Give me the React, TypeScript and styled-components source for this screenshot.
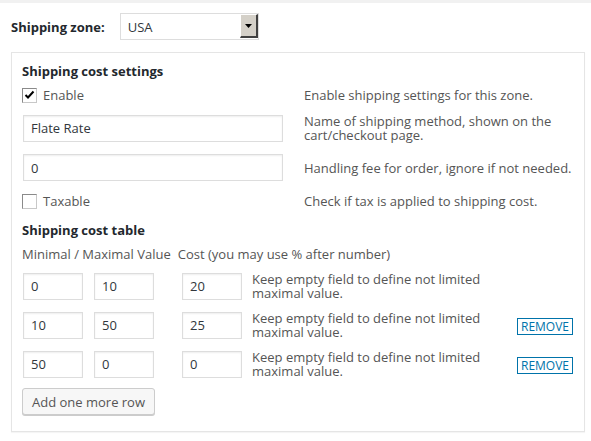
import React from "react";
import styled, { createGlobalStyle } from "styled-components";

const Global = createGlobalStyle`
  html, body { margin: 0; padding: 0; background: #fff; }
  body { font-family: "Open Sans", "Noto Sans", sans-serif; font-size: 13px; color: #555; }
  * { box-sizing: border-box; }
`;

const Page = styled.div`
  width: 591px;
  height: 441px;
  background: #fff;
  border-top: 3px solid #f1f1f1;
  padding: 10px 7px 0 11px;
`;

const ZoneRow = styled.div`
  display: flex;
  align-items: center;
  gap: 15px;
  height: 27px;
`;

const BoldLabel = styled.div`
  font-weight: 700;
  color: #23282d;
  font-size: 13px;
`;

const Select = styled.div`
  width: 139px;
  height: 27px;
  border: 1px solid #ddd;
  display: flex;
  align-items: stretch;
  background: #fff;
`;

const SelectValue = styled.div`
  flex: 1;
  display: flex;
  align-items: center;
  padding-left: 7px;
  color: #32373c;
`;

const Arrow = styled.div`
  width: 18px;
  background: #d4d0c8;
  border-top: 1px solid #fff;
  border-left: 1px solid #fff;
  border-right: 2px solid #404040;
  border-bottom: 2px solid #404040;
  display: flex;
  align-items: center;
  justify-content: center;
  margin: 0 0 1px 0;
`;

const Box = styled.div`
  margin-top: 12px;
  width: 574px;
  border: 1px solid #e5e5e5;
  box-shadow: 0 1px 1px rgba(0, 0, 0, 0.04);
  padding: 8px 10px 16px 10px;
  display: flex;
  flex-direction: column;
`;

const Heading = styled.div<{ $mt?: number }>`
  font-weight: 700;
  color: #23282d;
  font-size: 13px;
  line-height: 20px;
  margin-top: ${(p) => p.$mt ?? 0}px;
`;

const FieldRow = styled.div<{ $mt: number; $h: number }>`
  display: grid;
  grid-template-columns: 282px 1fr;
  align-items: center;
  margin-top: ${(p) => p.$mt}px;
  min-height: ${(p) => p.$h}px;
`;

const CheckLabel = styled.label`
  display: flex;
  align-items: center;
  gap: 6px;
  color: #555;
  height: 14px;
`;

const Check = styled.span`
  width: 15px;
  height: 15px;
  border: 1px solid #8a8a8a;
  border-right-color: #c8c8c8;
  border-bottom-color: #c8c8c8;
  background: #fff;
  display: inline-flex;
  align-items: center;
  justify-content: center;
`;

const Desc = styled.div`
  color: #555;
  line-height: 14px;
`;

const TextInput = styled.div<{ $w: number }>`
  width: ${(p) => p.$w}px;
  height: 27px;
  border: 1px solid #ddd;
  box-shadow: inset 0 1px 2px rgba(0, 0, 0, 0.07);
  display: flex;
  align-items: center;
  padding-left: 7px;
  color: #32373c;
  margin-left: 1px;
`;

const ColLabels = styled.div`
  display: flex;
  margin-top: 5px;
  line-height: 18px;
  color: #555;
  gap: 7px;
`;

const CostRow = styled.div<{ $mt: number }>`
  display: grid;
  grid-template-columns: 61px 71px 88px 1fr auto;
  align-items: center;
  margin-top: ${(p) => p.$mt}px;
  height: 27px;
`;

const Cell = styled.div<{ $pl?: number }>`
  padding-left: ${(p) => p.$pl ?? 0}px;
  display: flex;
`;

const SmallInput = styled.div`
  width: 60px;
  height: 27px;
  border: 1px solid #ddd;
  box-shadow: inset 0 1px 2px rgba(0, 0, 0, 0.07);
  display: flex;
  align-items: center;
  padding-left: 7px;
  color: #32373c;
`;

const RowDesc = styled.div`
  color: #555;
  line-height: 14px;
  padding-left: 10px;
`;

const Remove = styled.button`
  font-family: inherit;
  font-size: 12px;
  color: #0073aa;
  background: #fff;
  border: 1px solid #0073aa;
  height: 17px;
  width: 56px;
  padding: 0;
  line-height: 15px;
  margin-right: 1px;
  margin-top: 2px;
`;

const AddButton = styled.button`
  margin-top: 11px;
  align-self: flex-start;
  font-family: inherit;
  font-size: 13px;
  color: #555;
  background: #f7f7f7;
  border: 1px solid #ccc;
  border-radius: 3px;
  box-shadow: 0 1px 0 #ccc;
  height: 27px;
  width: 133px;
  padding: 0;
`;

const rows = [
  { a: "0", b: "10", c: "20", remove: false },
  { a: "10", b: "50", c: "25", remove: true },
  { a: "50", b: "0", c: "0", remove: true },
];

export default function App() {
  return (
    <>
      <Global />
      <Page>
        <ZoneRow>
          <BoldLabel>Shipping zone:</BoldLabel>
          <Select>
            <SelectValue>USA</SelectValue>
            <Arrow>
              <svg width="7" height="4" viewBox="0 0 7 4">
                <path d="M0 0H7L3.5 4Z" fill="#000" />
              </svg>
            </Arrow>
          </Select>
        </ZoneRow>
        <Box>
          <Heading>Shipping cost settings</Heading>
          <FieldRow $mt={7} $h={14}>
            <CheckLabel>
              <Check>
                <svg width="11" height="10" viewBox="0 0 11 10">
                  <path d="M1.5 5 L4 7.5 L9.5 1.5" stroke="#000" strokeWidth="2" fill="none" />
                </svg>
              </Check>
              Enable
            </CheckLabel>
            <Desc>Enable shipping settings for this zone.</Desc>
          </FieldRow>
          <FieldRow $mt={12} $h={27}>
            <TextInput $w={260}>Flate Rate</TextInput>
            <Desc>
              Name of shipping method, shown on the
              <br />
              cart/checkout page.
            </Desc>
          </FieldRow>
          <FieldRow $mt={12} $h={27}>
            <TextInput $w={260}>0</TextInput>
            <Desc>Handling fee for order, ignore if not needed.</Desc>
          </FieldRow>
          <FieldRow $mt={13} $h={14}>
            <CheckLabel>
              <Check />
              Taxable
            </CheckLabel>
            <Desc>Check if tax is applied to shipping cost.</Desc>
          </FieldRow>
          <Heading $mt={12}>Shipping cost table</Heading>
          <ColLabels>
            <span>Minimal / Maximal Value</span>
            <span>Cost (you may use % after number)</span>
          </ColLabels>
          {rows.map((r, i) => (
            <CostRow key={i} $mt={i === 0 ? 9 : 12}>
              <Cell $pl={1}>
                <SmallInput>{r.a}</SmallInput>
              </Cell>
              <Cell $pl={11}>
                <SmallInput>{r.b}</SmallInput>
              </Cell>
              <Cell $pl={28}>
                <SmallInput>{r.c}</SmallInput>
              </Cell>
              <RowDesc>
                Keep empty field to define not limited
                <br />
                maximal value.
              </RowDesc>
              {r.remove ? <Remove>REMOVE</Remove> : <span />}
            </CostRow>
          ))}
          <AddButton>Add one more row</AddButton>
        </Box>
      </Page>
    </>
  );
}
